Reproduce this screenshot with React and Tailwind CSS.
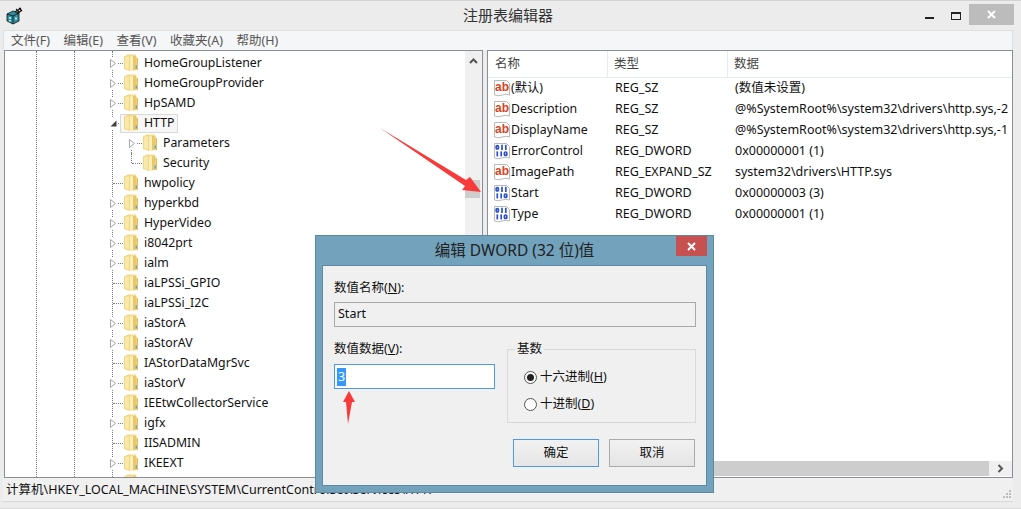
const FONT = "font-['Noto_Sans','Noto_Sans_CJK_SC',sans-serif]";

function Folder() {
  return (
    <svg width="15" height="18" viewBox="0 0 15 18" className="shrink-0">
      <path d="M0 2.5 L4 0.5 L6 0.5 L6 17 L0 15 Z" fill="#f1d680" />
      <path d="M1 3 L5 2 L5 15.5 L1 14.5 Z" fill="#f8e8a9" />
      <path d="M6 0.5 L12 0.5 L12 16 L6 17 Z" fill="#f3dc90" />
      <path d="M6 3 L9 2 L9 16 L6 17 Z" fill="#fbeebb" />
      <path d="M9 2 L12.5 2 L12.5 16 L9 16 Z" fill="#e9c868" />
      <rect x="12.5" y="4" width="1.5" height="12" fill="#e2bc58" />
      <rect x="11.6" y="11.5" width="1.4" height="3" fill="#5ea6dc" />
    </svg>
  );
}

function Chevron({ open }) {
  if (open) {
    return (
      <svg width="7" height="7" viewBox="0 0 7 7" className="shrink-0">
        <path d="M0.5 6.5 L6.5 6.5 L6.5 0.5 Z" fill="#404040" />
      </svg>
    );
  }
  return (
    <svg width="6" height="9" viewBox="0 0 6 9" className="shrink-0">
      <path d="M0.5 0.5 L5.5 4.5 L0.5 8.5 Z" fill="#fff" stroke="#a6a6a6" />
    </svg>
  );
}

const treeRows = [
  { t: "HomeGroupListener", c: 1 },
  { t: "HomeGroupProvider", c: 1 },
  { t: "HpSAMD", c: 1 },
  { t: "HTTP", o: 1, sel: 1 },
  { t: "Parameters", c: 1, d: 1, down: 1 },
  { t: "Security", d: 1, up: 1 },
  { t: "hwpolicy" },
  { t: "hyperkbd", c: 1 },
  { t: "HyperVideo", c: 1 },
  { t: "i8042prt", c: 1 },
  { t: "ialm", c: 1 },
  { t: "iaLPSSi_GPIO" },
  { t: "iaLPSSi_I2C" },
  { t: "iaStorA", c: 1 },
  { t: "iaStorAV", c: 1 },
  { t: "IAStorDataMgrSvc" },
  { t: "iaStorV", c: 1 },
  { t: "IEEtwCollectorService" },
  { t: "igfx", c: 1 },
  { t: "IISADMIN" },
  { t: "IKEEXT", c: 1 },
  { t: "" },
];

function GuideLine({ left }) {
  return <div className={`absolute top-0 bottom-0 w-0 border-l border-dotted border-[#7a7a7a] ${left}`} />;
}

function TreeRow({ row }) {
  const hasBtn = row.o || row.c;
  return (
    <div className={`flex h-5 shrink-0 items-center ${row.d ? "pl-[120px]" : "pl-[101px]"}`}>
      <div className="relative flex h-5 w-[14px] shrink-0 items-center justify-center">
        {row.up && <div className="absolute left-[6px] top-0 h-[10px] w-0 border-l border-dotted border-[#7a7a7a]" />}
        {row.down && <div className="absolute left-[6px] bottom-0 h-[5px] w-0 border-l border-dotted border-[#7a7a7a]" />}
        <div className={`absolute top-[10px] h-0 border-t border-dotted border-[#7a7a7a] ${hasBtn ? "left-[12px] w-[5px]" : "left-[7px] w-[10px]"}`} />
        {hasBtn && (
          <div className="relative flex h-[11px] w-[9px] items-center justify-center bg-white">
            {row.o ? <Chevron open /> : <Chevron />}
          </div>
        )}
      </div>
      <div className="w-[1px] shrink-0" />
      <div className={`relative flex h-[19px] items-center pl-[3px] pr-[3px] -ml-[1px] border ${row.sel ? "border-[#d9d9d9] bg-[#f7f7f7]" : "border-transparent"}`}>
        <Folder />
        <span className="ml-[5px] text-[12.3px] leading-none text-[#111]">{row.t}</span>
      </div>
    </div>
  );
}

function AbIcon() {
  return (
    <svg width="16" height="17" viewBox="0 0 16 17" className="shrink-0">
      <path d="M0.5 0.5 L12.5 0.5 L15.5 3.5 L15.5 15 Q12 13.5 8 15 Q4 16.5 0.5 15 Z" fill="#fff" stroke="#b8b8b8" />
      <text x="1" y="11" fontSize="12" fontWeight="700" fill="#d9431e" fontFamily="Liberation Sans, sans-serif">ab</text>
    </svg>
  );
}

function BinIcon() {
  return (
    <svg width="16" height="17" viewBox="0 0 16 17" className="shrink-0">
      <path d="M0.5 0.5 L12.5 0.5 L15.5 3.5 L15.5 15 Q12 13.5 8 15 Q4 16.5 0.5 15 Z" fill="#fff" stroke="#b8b8b8" />
      <g fill="none" stroke="#2a4fd0" strokeWidth="1.7">
        <rect x="2.2" y="2.6" width="2.2" height="3.4" rx="1" />
        <path d="M8 1.8 V7" />
        <path d="M11.8 1.8 V7" />
        <path d="M3.3 8.4 V13.4" />
        <path d="M7.2 8.4 V13.4" />
        <rect x="10.4" y="9" width="2.4" height="3.4" rx="1" />
      </g>
    </svg>
  );
}

const values = [
  ["ab", "(默认)", "REG_SZ", "(数值未设置)"],
  ["ab", "Description", "REG_SZ", "@%SystemRoot%\\system32\\drivers\\http.sys,-2"],
  ["ab", "DisplayName", "REG_SZ", "@%SystemRoot%\\system32\\drivers\\http.sys,-1"],
  ["bin", "ErrorControl", "REG_DWORD", "0x00000001 (1)"],
  ["ab", "ImagePath", "REG_EXPAND_SZ", "system32\\drivers\\HTTP.sys"],
  ["bin", "Start", "REG_DWORD", "0x00000003 (3)"],
  ["bin", "Type", "REG_DWORD", "0x00000001 (1)"],
];

function U({ children }) {
  return <span className="underline">{children}</span>;
}

function Radio({ checked, children }) {
  return (
    <div className="flex items-center text-[12.5px] leading-none text-[#111]">
      <div className="flex h-[13px] w-[13px] items-center justify-center rounded-full border border-[#555] bg-white">
        {checked && <div className="h-[7px] w-[7px] rounded-full bg-[#222]" />}
      </div>
      <span className="ml-[3px]">{children}</span>
    </div>
  );
}

function Dialog() {
  return (
    <div className="absolute left-[315px] top-[235px] flex h-[258px] w-[399px] flex-col border border-[#5d8aa3] bg-[#72a2bc] px-[6px] pb-[6px]">
      <div className="relative flex h-[29px] shrink-0 items-center justify-center text-[15.5px] text-[#222]">
        编辑 DWORD (32 位)值
        <div className="absolute right-0 top-0 flex h-[20px] w-[31px] items-center justify-center bg-[#c75050]">
          <svg width="9" height="9" viewBox="0 0 9 9"><path d="M1 1 L8 8 M8 1 L1 8" stroke="#fff" strokeWidth="2" /></svg>
        </div>
      </div>
      <div className="flex flex-1 flex-col border border-[#5d8aa3] bg-[#f0f0f0] pl-[11px] pr-[10px] text-[12.5px] text-[#111]">
        <div className="mt-[13px] leading-[18px]">数值名称(<U>N</U>):</div>
        <div className="mt-[5px] flex h-[25px] items-center border border-[#a9a9a9] pl-[3px]">Start</div>
        <div className="mt-[12px] flex">
          <div className="w-[161px] shrink-0">
            <div className="pt-px leading-[18px]">数值数据(<U>V</U>):</div>
            <div className="mt-[6px] flex h-[25px] items-center border border-[#4d9be8] bg-white pl-[2px]">
              <span className="bg-[#3399ff] px-[1px] leading-[18px] text-white">3</span>
            </div>
          </div>
          <fieldset className="ml-[12px] mt-[2px] h-[82px] flex-1 border border-[#d9d9d9] pl-[16px]">
            <legend className="ml-[-9px] px-[2px] leading-[16px]">基数</legend>
            <div className="mt-[14px]"><Radio checked>十六进制(<U>H</U>)</Radio></div>
            <div className="mt-[14px]"><Radio>十进制(<U>D</U>)</Radio></div>
          </fieldset>
        </div>
        <div className="mt-[16px] flex justify-end gap-[10px] pr-[1px]">
          <div className="flex h-[28px] w-[86px] items-center justify-center border border-[#4d9be8] bg-gradient-to-b from-[#f2f2f2] to-[#e5e5e5]">确定</div>
          <div className="flex h-[28px] w-[86px] items-center justify-center border border-[#acacac] bg-gradient-to-b from-[#f2f2f2] to-[#e5e5e5]">取消</div>
        </div>
      </div>
    </div>
  );
}

function AppIcon() {
  return (
    <svg width="17" height="18" viewBox="0 0 17 18">
      <path d="M1 7 L7 4 L13 6 L13 14 L7 17 L1 14 Z" fill="#2f8f9f" stroke="#111" strokeWidth="0.8" />
      <path d="M1 7 L7 9 L13 6 M7 9 L7 17" stroke="#111" strokeWidth="0.8" fill="none" />
      <path d="M3 10 h2 v2 h-2 z M3 13 h2 v1.6 h-2 z M9 10.5 h2 v2 h-2 z" fill="#a5e3e8" />
      <path d="M9 5 L15 1 M11 7 L16 3 M10 2 L13 5 M13 1 L16 4" stroke="#111" strokeWidth="1.1" />
    </svg>
  );
}

export default function App() {
  return (
    <div className={`relative h-[509px] w-[1021px] overflow-hidden border-b border-[#d9d9d9] bg-[#ececec] ${FONT}`}>
      <div className="flex h-[30px] items-center border-t border-[#d4d4d4] pl-[6px]">
        <div className="flex w-[20px] shrink-0"><AppIcon /></div>
        <div className="flex-1 pl-[65px] text-center text-[15px] text-[#333]">注册表编辑器</div>
        <div className="mr-[7px] flex h-[21px] items-start">
          <div className="mt-[12px] mr-[17px] h-[2px] w-[9px] bg-[#222]" />
          <div className="mt-[7px] mr-[8px] h-[8px] w-[10px] border border-t-2 border-[#222]" />
          <div className="-mt-px flex h-[21px] w-[45px] items-center justify-center bg-[#bcbcbc]">
            <svg width="9" height="9" viewBox="0 0 9 9"><path d="M1 1 L8 8 M8 1 L1 8" stroke="#fff" strokeWidth="2" /></svg>
          </div>
        </div>
      </div>

      <div className="mx-[3px] flex h-[20px] w-[1010px] items-center gap-[13.5px] border border-b-0 border-[#dfdfdf] bg-[#f5f6f7] pl-[7px] pt-px text-[12.5px] text-[#555]">
        <span>文件(F)</span>
        <span>编辑(E)</span>
        <span>查看(V)</span>
        <span>收藏夹(A)</span>
        <span>帮助(H)</span>
      </div>

      <div className="mx-[4px] flex h-[428px] w-[1009px] gap-[4px]">
        <div className="relative flex w-[479px] shrink-0 overflow-hidden border border-[#8a8f96] bg-white">
          <GuideLine left="left-[31px]" />
          <GuideLine left="left-[69px]" />
          <GuideLine left="left-[107px]" />
          <div className="flex flex-1 flex-col overflow-hidden pt-[2px]">
            {treeRows.map((r, i) => <TreeRow key={i} row={r} />)}
          </div>
          <div className="flex w-[17px] shrink-0 flex-col bg-[#f0f0f0]">
            <div className="flex h-[20px] items-center justify-center">
              <svg width="9" height="6" viewBox="0 0 9 6"><path d="M1 5 L4.5 1.5 L8 5" fill="none" stroke="#555" strokeWidth="2" /></svg>
            </div>
            <div className="mt-[109px] h-[18px] w-[15px] bg-[#cdcdcd]" />
          </div>
        </div>

        <div className="flex flex-1 flex-col border border-[#8a8f96] bg-white">
          <div className="flex h-[27px] shrink-0 items-center border-b border-[#e3ebf5] text-[12.5px] text-[#444]">
            <div className="h-full w-[120px] border-r border-[#e3ebf5] pl-[7px] leading-[26px]">名称</div>
            <div className="h-full w-[120px] border-r border-[#e3ebf5] pl-[6px] leading-[26px]">类型</div>
            <div className="h-full flex-1 pl-[6px] leading-[26px]">数据</div>
          </div>
          <div className="flex flex-1 flex-col">
            {values.map(([k, n, ty, d]) => (
              <div key={n} className="flex h-[21px] shrink-0 items-center text-[12.5px] text-[#111]">
                <div className="flex w-[120px] items-center pl-[6px]">
                  {k === "ab" ? <AbIcon /> : <BinIcon />}
                  <span className="ml-px text-[12.3px]">{n}</span>
                </div>
                <div className="w-[120px] pl-[7px]">{ty}</div>
                <div className="flex-1 overflow-hidden whitespace-nowrap pl-[7px]">{d}</div>
              </div>
            ))}
          </div>
          <div className="mb-px flex h-[15px] shrink-0 bg-[#f0f0f0]">
            <div className="flex-1 bg-[#cdcdcd]" />
            <div className="flex w-[23px] items-center justify-center">
              <svg width="7" height="9" viewBox="0 0 7 9"><path d="M1.5 1 L5 4.5 L1.5 8" fill="none" stroke="#555" strokeWidth="2" /></svg>
            </div>
          </div>
        </div>
      </div>

      <div className="relative mx-[3px] flex h-[24px] w-[1010px] items-center border-b border-[#d9d9d9] bg-[#f0f0f0] pl-[3px] pt-px text-[12.5px] text-[#111]">
        计算机\HKEY_LOCAL_MACHINE\SYSTEM\CurrentControlSet\Services\HTTP
        <svg className="absolute bottom-[2px] right-[1px]" width="9" height="9" viewBox="0 0 9 9" fill="#bdbdbd">
          <rect x="6" y="0" width="2" height="2" />
          <rect x="3" y="3" width="2" height="2" /><rect x="6" y="3" width="2" height="2" />
          <rect x="0" y="6" width="2" height="2" /><rect x="3" y="6" width="2" height="2" /><rect x="6" y="6" width="2" height="2" />
        </svg>
      </div>

      <Dialog />

      <svg className="pointer-events-none absolute left-0 top-0" width="1021" height="509">
        <path d="M380 128 L466 180 L470 177 L481 192 L462 190 L465 186 Z" fill="#f83a3a" />
        <path d="M349 391 L355 402 L352 402 L348 424 L346 402 L343 402 Z" fill="#f83a3a" />
      </svg>
    </div>
  );
}
